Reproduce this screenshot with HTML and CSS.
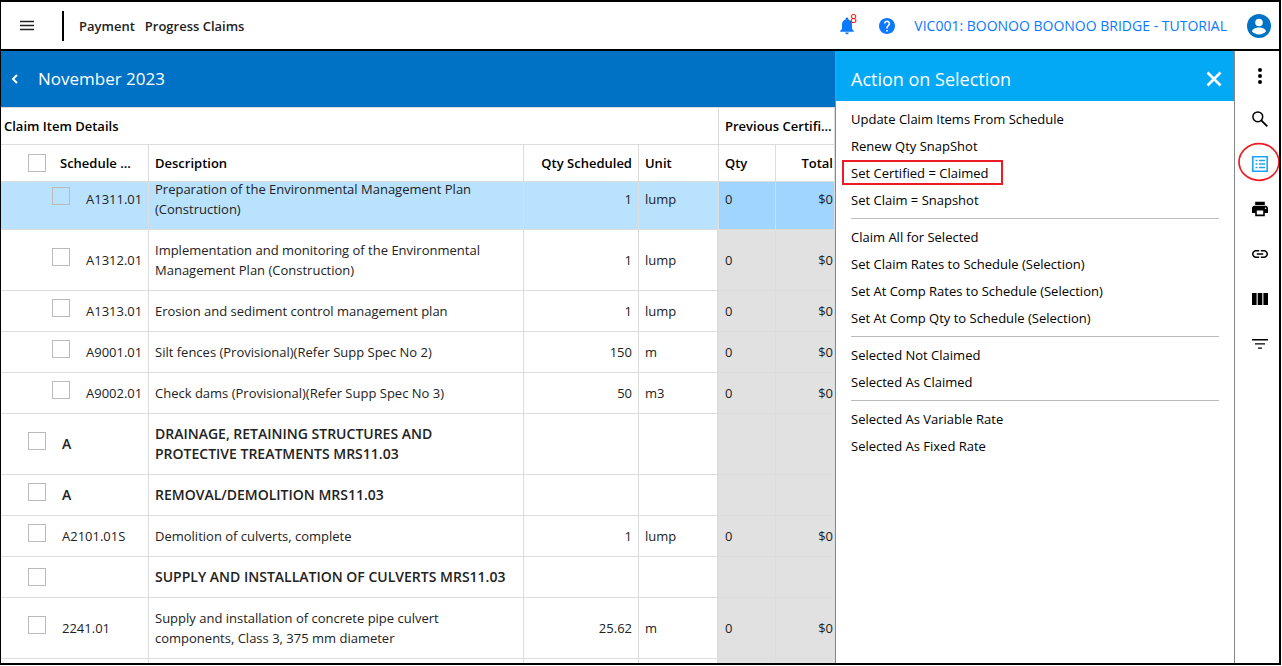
FILE: index.html
```html
<!DOCTYPE html>
<html lang="en">
<head>
<meta charset="utf-8">
<title>Progress Claims</title>
<link rel="stylesheet" href="styles.css">
</head>
<body>
<div class="app">
  <header class="topbar">
    <button class="icon-btn menu-btn" aria-label="Menu"><svg width="14" height="12" viewBox="0 0 14 12"><path d="M0 1.500h14M0 5.500h14M0 9.500h14" stroke="#222" stroke-width="1.300"/></svg></button>
    <nav class="crumbs"><a href="#">Payment</a><a href="#">Progress Claims</a></nav>
    <button class="icon-btn bell" aria-label="Notifications"><svg width="16" height="18" viewBox="0 0 16 18"><path d="M8 0.500c.9 0 1.400.6 1.400 1.400v.5C11.800 3 13 5 13 7.300V12l1.800 1.800v.9H1.200v-.9L3 12V7.300C3 5 4.200 3 6.600 2.400v-.5C6.600 1.100 7.100.5 8 .5zM6.200 15.500h3.600c0 1-.8 1.800-1.800 1.800s-1.800-.8-1.800-1.800z" fill="#0a78ff"/></svg><span class="badge">8</span></button>
    <button class="icon-btn help" aria-label="Help"><svg width="16" height="16" viewBox="2 2 20 20"><path d="M12 2C6.480 2 2 6.480 2 12s4.480 10 10 10 10-4.480 10-10S17.520 2 12 2zm1 17h-2v-2h2v2zm2.070-7.750l-.9.920C13.450 12.900 13 13.500 13 15h-2v-.5c0-1.100.45-2.100 1.170-2.830l1.240-1.260c.37-.36.59-.86.59-1.410 0-1.100-.9-2-2-2s-2 .9-2 2H8c0-2.210 1.790-4 4-4s4 1.790 4 4c0 .88-.36 1.680-.93 2.250z" fill="#0a78ff"/></svg></button>
    <a class="project" href="#">VIC001: BOONOO BOONOO BRIDGE - TUTORIAL</a>
    <button class="icon-btn user" aria-label="Account"><svg width="24" height="24" viewBox="0 0 24 24"><circle cx="12" cy="12" r="12" fill="#0072c6"/><circle cx="12" cy="8.500" r="3.800" fill="#fff"/><path d="M5 17.500c0-2.700 4.500-4 7-4s7 1.300 7 4c-1.600 1.800-4.200 2.900-7 2.900s-5.400-1.100-7-2.900z" fill="#fff"/></svg></button>
  </header>
  <div class="workspace">
    <main class="content">
      <div class="titlebar">
        <button class="icon-btn" aria-label="Back"><svg width="8" height="10" viewBox="0 0 8 10"><path d="M6 1L2 5l4 4" fill="none" stroke="#fff" stroke-width="2"/></svg></button>
        <h1>November 2023</h1>
      </div>
      <table class="grid">
        <colgroup><col class="c-code"><col><col class="c-sched"><col class="c-unit"><col class="c-qty"><col class="c-total"></colgroup>
        <thead>
          <tr><th colspan="4" class="band">Claim Item Details</th><th colspan="2">Previous Certifi...</th></tr>
          <tr><th><label class="code"><input type="checkbox" aria-label="Select all"><span>Schedule ...</span></label></th><th>Description</th><th class="num">Qty Scheduled</th><th>Unit</th><th>Qty</th><th class="num last">Total</th></tr>
        </thead>
      </table>
      <div class="rows">
        <table class="grid body">
          <colgroup><col class="c-code"><col><col class="c-sched"><col class="c-unit"><col class="c-qty"><col class="c-total"></colgroup>
          <tbody>
            <tr class="selected"><td><label class="code child"><input type="checkbox"><span>A1311.01</span></label></td><td>Preparation of the Environmental Management Plan<br>(Construction)</td><td class="num">1</td><td class="unit">lump</td><td class="prev">0</td><td class="prev num last">$0</td></tr>
            <tr><td><label class="code child"><input type="checkbox"><span>A1312.01</span></label></td><td>Implementation and monitoring of the Environmental<br>Management Plan (Construction)</td><td class="num">1</td><td class="unit">lump</td><td class="prev">0</td><td class="prev num last">$0</td></tr>
            <tr><td><label class="code child"><input type="checkbox"><span>A1313.01</span></label></td><td>Erosion and sediment control management plan</td><td class="num">1</td><td class="unit">lump</td><td class="prev">0</td><td class="prev num last">$0</td></tr>
            <tr><td><label class="code child"><input type="checkbox"><span>A9001.01</span></label></td><td>Silt fences (Provisional)(Refer Supp Spec No 2)</td><td class="num">150</td><td class="unit">m</td><td class="prev">0</td><td class="prev num last">$0</td></tr>
            <tr><td><label class="code child"><input type="checkbox"><span>A9002.01</span></label></td><td>Check dams (Provisional)(Refer Supp Spec No 3)</td><td class="num">50</td><td class="unit">m3</td><td class="prev">0</td><td class="prev num last">$0</td></tr>
            <tr class="group"><td><label class="code"><input type="checkbox"><span>A</span></label></td><td>DRAINAGE, RETAINING STRUCTURES AND<br>PROTECTIVE TREATMENTS MRS11.03</td><td></td><td class="unit"></td><td class="prev"></td><td class="prev"></td></tr>
            <tr class="group"><td><label class="code"><input type="checkbox"><span>A</span></label></td><td>REMOVAL/DEMOLITION MRS11.03</td><td></td><td class="unit"></td><td class="prev"></td><td class="prev"></td></tr>
            <tr><td><label class="code"><input type="checkbox"><span>A2101.01S</span></label></td><td>Demolition of culverts, complete</td><td class="num">1</td><td class="unit">lump</td><td class="prev">0</td><td class="prev num last">$0</td></tr>
            <tr class="group"><td><label class="code blank"><input type="checkbox" aria-label="Select group"></label></td><td>SUPPLY AND INSTALLATION OF CULVERTS MRS11.03</td><td></td><td class="unit"></td><td class="prev"></td><td class="prev"></td></tr>
            <tr><td><label class="code"><input type="checkbox"><span>2241.01</span></label></td><td>Supply and installation of concrete pipe culvert<br>components, Class 3, 375 mm diameter</td><td class="num">25.62</td><td class="unit">m</td><td class="prev">0</td><td class="prev num last">$0</td></tr>
            <tr><td></td><td></td><td></td><td class="unit"></td><td class="prev"></td><td class="prev"></td></tr>
          </tbody>
        </table>
      </div>
    </main>
    <aside class="panel">
      <div class="panel-head">
        <h2>Action on Selection</h2>
        <button class="icon-btn" aria-label="Close"><svg width="16" height="16" viewBox="0 0 16 16"><path d="M1.500 1.500l13 13M14.500 1.500l-13 13" stroke="#fff" stroke-width="2.600"/></svg></button>
      </div>
      <div class="actions">
        <button>Update Claim Items From Schedule</button>
        <button>Renew Qty SnapShot</button>
        <button class="marked">Set Certified = Claimed</button>
        <button>Set Claim = Snapshot</button>
        <hr>
        <button>Claim All for Selected</button>
        <button>Set Claim Rates to Schedule (Selection)</button>
        <button>Set At Comp Rates to Schedule (Selection)</button>
        <button>Set At Comp Qty to Schedule (Selection)</button>
        <hr>
        <button>Selected Not Claimed</button>
        <button>Selected As Claimed</button>
        <hr>
        <button>Selected As Variable Rate</button>
        <button>Selected As Fixed Rate</button>
      </div>
    </aside>
    <nav class="rail" aria-label="Tools">
      <button class="icon-btn" aria-label="More"><svg width="16" height="16" viewBox="0 0 16 16"><circle cx="8" cy="4" r="2"/><circle cx="8" cy="10" r="2"/><circle cx="8" cy="16" r="2"/></svg></button>
      <button class="icon-btn" aria-label="Search"><svg width="16" height="16" viewBox="0 0 16 16"><circle cx="5.800" cy="5.800" r="4.900" fill="none" stroke="#000" stroke-width="1.500"/><path d="M9.300 9.300l6 6" stroke="#000" stroke-width="1.900"/></svg></button>
      <button class="icon-btn" aria-label="Actions"><svg width="16" height="16" viewBox="0 0 16 16"><path d="M.8.800h14.400v14.400H.8z" fill="none" stroke="#1ba5f8" stroke-width="1.600"/><path d="M3.500 4.500h2M7 4.500h6M3.500 8h2M7 8h6M3.500 11.500h2M7 11.500h6" stroke="#1ba5f8" stroke-width="1.500"/></svg><svg class="ring" width="42" height="40" viewBox="0 0 42 40"><ellipse cx="21" cy="20" rx="20" ry="18.300" fill="none" stroke="#ed1c24" stroke-width="1.700"/></svg></button>
      <button class="icon-btn" aria-label="Print"><svg width="16" height="16" viewBox="2 2 20 20"><path d="M19 8H5c-1.660 0-3 1.340-3 3v6h4v4h12v-4h4v-6c0-1.660-1.340-3-3-3zm-3 11H8v-5h8v5zm3-7c-.55 0-1-.45-1-1s.45-1 1-1 1 .45 1 1-.45 1-1 1zm-1-9H6v4h12V3z"/></svg></button>
      <button class="icon-btn" aria-label="Link"><svg width="16" height="16" viewBox="2 2 20 20"><path d="M3.900 12c0-1.710 1.390-3.100 3.100-3.100h4V7H7c-2.760 0-5 2.240-5 5s2.240 5 5 5h4v-1.900H7c-1.710 0-3.100-1.390-3.100-3.100zM8 13h8v-2H8v2zm9-6h-4v1.900h4c1.710 0 3.100 1.390 3.100 3.100s-1.390 3.100-3.100 3.100h-4V17h4c2.760 0 5-2.240 5-5s-2.240-5-5-5z"/></svg></button>
      <button class="icon-btn" aria-label="Columns"><svg width="16" height="16" viewBox="0 0 16 16"><path d="M0 2h4.600v12H0zM5.700 2h4.600v12H5.700zM11.400 2H16v12h-4.600z"/></svg></button>
      <button class="icon-btn" aria-label="Filter"><svg width="16" height="16" viewBox="0 0 16 16"><path d="M0 3h16v1.400H0zM3 7.200h10v1.400H3zM6 11.400h4v1.400H6z"/></svg></button>
    </nav>
  </div>
</div>
</body>
</html>
```

FILE: styles.css
```css
* { box-sizing: border-box; }
html, body { height: 100%; }
body {
  margin: 0;
  background: #fff;
  color: #222;
  font: 13px/20px "Open Sans", "Noto Sans", sans-serif;
  padding: 0 1px 1px 0;
}
button, input { font: inherit; color: inherit; margin: 0; }
a { color: inherit; text-decoration: none; }
h1, h2 { margin: 0; font-weight: 400; font-size: 17px; line-height: 24px; }
h2 { font-size: 18px; }

.app {
  height: 100%;
  display: flex;
  flex-direction: column;
  border: 2px solid #000;
  border-left-width: 1px;
  overflow: hidden;
}
.icon-btn {
  border: 0;
  padding: 0;
  background: none;
  display: flex;
  align-items: center;
  justify-content: center;
  position: relative;
  flex: none;
}
.icon-btn svg { overflow: visible; }

.topbar {
  flex: none;
  display: flex;
  align-items: center;
  height: 49px;
  padding: 0 8px 0 19px;
  border-bottom: 2px solid #000;
}
.crumbs {
  display: flex;
  align-items: center;
  gap: 10px;
  height: 30px;
  margin-left: 28px;
  margin-right: auto;
  padding-left: 15px;
  border-left: 2px solid #000;
  font-weight: 600;
}
.badge {
  position: absolute;
  top: -4px;
  left: 11px;
  color: #f00;
  font: 12px/12px "Liberation Sans", sans-serif;
}
.help { margin-left: 24px; }
.project { margin: 0 20px 0 19px; font-size: 14px; color: #0a78ff; }

.workspace { flex: 1; display: flex; min-height: 0; }
.content {
  flex: 1;
  min-width: 0;
  display: flex;
  flex-direction: column;
  overflow: hidden;
}
.titlebar {
  flex: none;
  display: flex;
  align-items: center;
  gap: 19px;
  height: 56px;
  padding-left: 10px;
  background: #0072c6;
  color: #fff;
}

.grid {
  width: 100%;
  table-layout: fixed;
  border-collapse: separate;
  border-spacing: 0;
}
.c-code { width: 148px; }
.c-sched { width: 115px; }
.c-unit { width: 80px; }
.c-qty { width: 57px; }
.c-total { width: 59px; }
.grid th, .grid td {
  padding: 10px 6px;
  text-align: left;
  border-right: 1px solid #ddd;
  border-bottom: 1px solid #ddd;
}
.grid th {
  height: 37px;
  padding: 8px 6px;
  color: #000;
  font-weight: 600;
  white-space: nowrap;
}
.grid tr:first-child th { border-top: 1px solid #ddd; }
.grid th.band { padding-left: 3px; }
.grid th[colspan="2"] { padding-right: 0; }
.grid .num { text-align: right; }
.grid .last { padding-right: 1px; }
.grid td { height: 41px; }
.grid th:first-child:not(.band), .grid td:first-child { padding-left: 27px; padding-right: 0; }
.grid .unit { border-right-width: 2px; }
.grid .prev { background: #e1e1e1; }
.selected td { background: #b9e2ff; }
.grid .selected .prev { background: #9fd5ff; }
.group td { font-size: 14px; font-weight: 600; }

.code { display: flex; align-items: center; height: 20px; gap: 16px; }
.code.child { padding-left: 24px; }
.code input {
  appearance: none;
  flex: none;
  width: 18px;
  height: 18px;
  border: 1px solid #bbb;
  background: transparent;
}
th .code { gap: 14px; }
td .code:not(.blank) input { margin-bottom: 6px; }

.rows { flex: 1; min-height: 0; overflow: hidden; }
/* The list is scrolled a few pixels past its first row. */
.body { margin-top: -13px; }

.panel {
  flex: none;
  width: 400px;
  border-left: 1px solid #888;
  border-right: 1px solid #888;
}
.panel-head {
  display: flex;
  align-items: center;
  justify-content: space-between;
  height: 50px;
  padding: 6px 12px 0 15px;
  background: #03a9f4;
  color: #fff;
}
.actions {
  display: flex;
  flex-direction: column;
  align-items: flex-start;
  padding: 4px 15px 5px 6px;
  color: #000;
}
.actions button {
  height: 25px;
  margin: 1px 0;
  padding: 0 12px 0 7px;
  border: 2px solid transparent;
  background: none;
  line-height: 20px;
}
.actions .marked { border-color: #ed1c24; }
.actions hr {
  align-self: stretch;
  margin: 5px 0 4px 9px;
  border: 0;
  border-top: 1px solid #bbb;
}

.rail {
  flex: none;
  width: 44px;
  padding-left: 5px;
}
.rail .icon-btn { width: 100%; height: 45px; }
.ring { position: absolute; top: 1px; left: -2px; }
```
